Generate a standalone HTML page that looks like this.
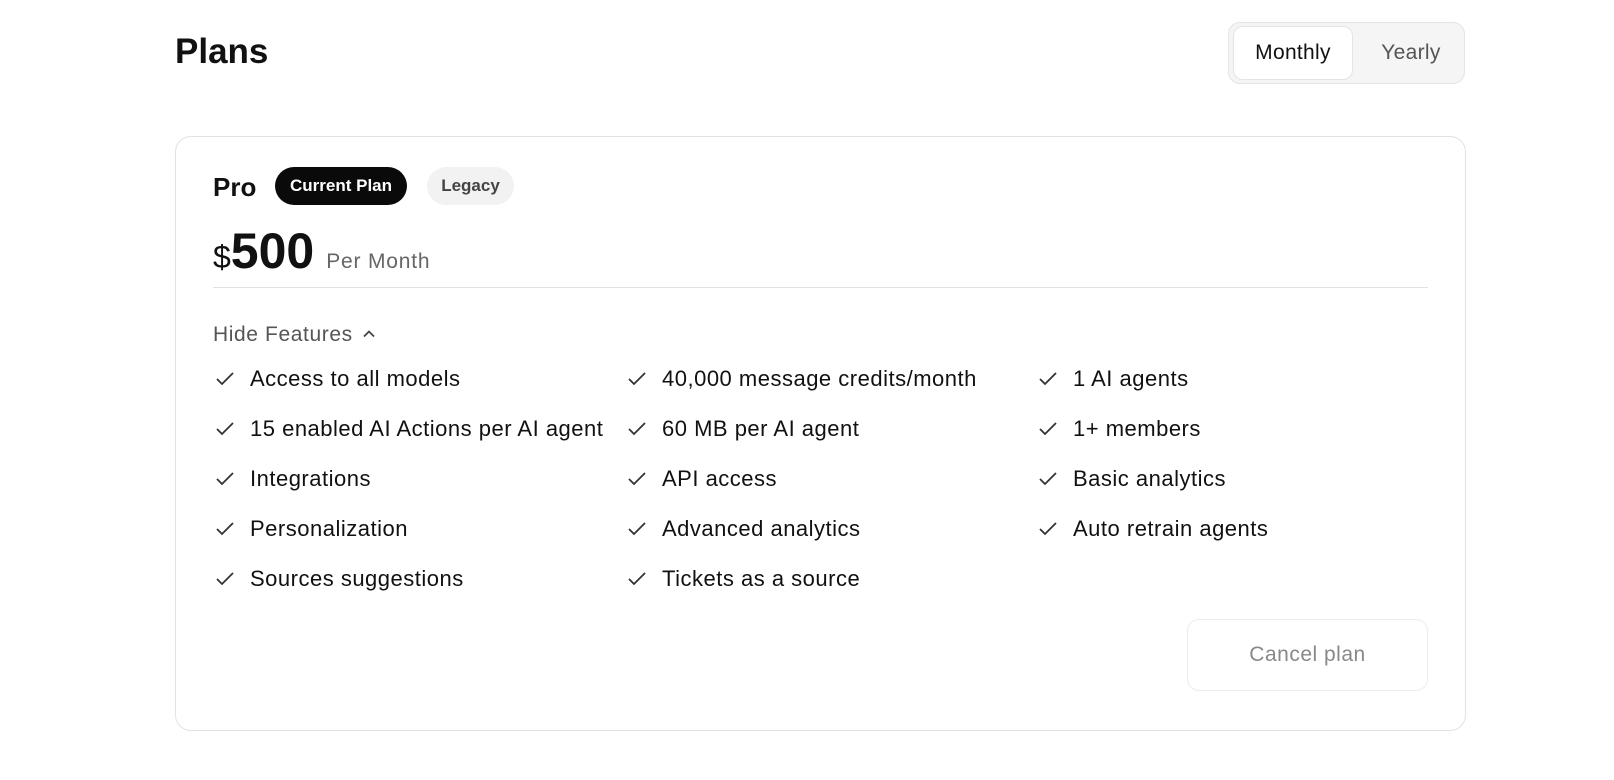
<!DOCTYPE html>
<html><head><style>
body{margin:0;width:1614px;height:780px;background:#fff;font-family:"Liberation Sans",sans-serif;color:#111;position:relative;overflow:hidden}
.a{position:absolute;white-space:nowrap}
.f{position:absolute;font-size:22px;letter-spacing:0.5px;line-height:24px;color:#111}
.f svg{position:absolute;left:-35px;top:3px}
</style></head><body>
<div class="a" style="left:175px;top:32px;font-size:35px;font-weight:bold;line-height:40px">Plans</div>
<div class="a" style="left:1228px;top:22px;width:237px;height:62px;border:1px solid #e4e4e4;border-radius:12px;background:#f5f5f5;box-sizing:border-box"></div>
<div class="a" style="left:1233px;top:26px;width:120px;height:54px;border:1px solid #e4e4e4;border-radius:10px;background:#fff;box-sizing:border-box;font-size:21px;line-height:52px;text-align:center;letter-spacing:0.3px">Monthly</div>
<div class="a" style="left:1360px;top:26px;width:102px;line-height:54px;font-size:21px;color:#555;text-align:center;letter-spacing:0.3px">Yearly</div>

<div class="a" style="left:175px;top:136px;width:1291px;height:595px;border:1px solid #e2e2e2;border-radius:16px;box-sizing:border-box"></div>
<div class="a" style="left:213px;top:172px;font-size:26px;font-weight:bold;line-height:30px">Pro</div>
<div class="a" style="left:275px;top:167px;width:132px;height:38px;border-radius:19px;background:#0a0a0a;color:#fff;font-size:17px;font-weight:bold;line-height:38px;text-align:center">Current Plan</div>
<div class="a" style="left:427px;top:167px;width:87px;height:38px;border-radius:19px;background:#f2f2f2;color:#444;font-size:17px;font-weight:bold;line-height:38px;text-align:center">Legacy</div>
<div class="a" style="left:213px;top:226px;line-height:50px"><span style="font-size:32px">$</span><span style="font-size:50px;font-weight:bold">500</span><span style="font-size:21px;color:#666;margin-left:12px;letter-spacing:0.8px">Per Month</span></div>
<div class="a" style="left:213px;top:287px;width:1215px;height:1px;background:#e2e2e2"></div>
<div class="a" style="left:213px;top:323px;font-size:21px;line-height:24px;color:#555;letter-spacing:0.6px">Hide Features <svg width="16" height="16" viewBox="0 0 16 16" style="vertical-align:-1px;margin-left:2px"><path d="M3 10.5L8 5.5l5 5" fill="none" stroke="#444" stroke-width="1.8"/></svg></div>

<div id="feats"></div>
<div class="a" style="left:1187px;top:619px;width:241px;height:72px;border:1px solid #ececec;border-radius:12px;box-sizing:border-box;font-size:21px;color:#888;line-height:70px;text-align:center;letter-spacing:0.5px">Cancel plan</div>
<script>
var cols=[[250,["Access to all models","15 enabled AI Actions per AI agent","Integrations","Personalization","Sources suggestions"]],[662,["40,000 message credits/month","60 MB per AI agent","API access","Advanced analytics","Tickets as a source"]],[1073,["1 AI agents","1+ members","Basic analytics","Auto retrain agents"]]];
var h="";cols.forEach(function(c){c[1].forEach(function(t,i){h+='<div class="f" style="left:'+c[0]+'px;top:'+(367+i*50)+'px"><svg width="20" height="18" viewBox="0 0 20 18"><path d="M2 9l5 5L18 3" fill="none" stroke="#333" stroke-width="1.8"/></svg>'+t+'</div>';});});
document.getElementById("feats").innerHTML=h;
</script>
</body></html>
